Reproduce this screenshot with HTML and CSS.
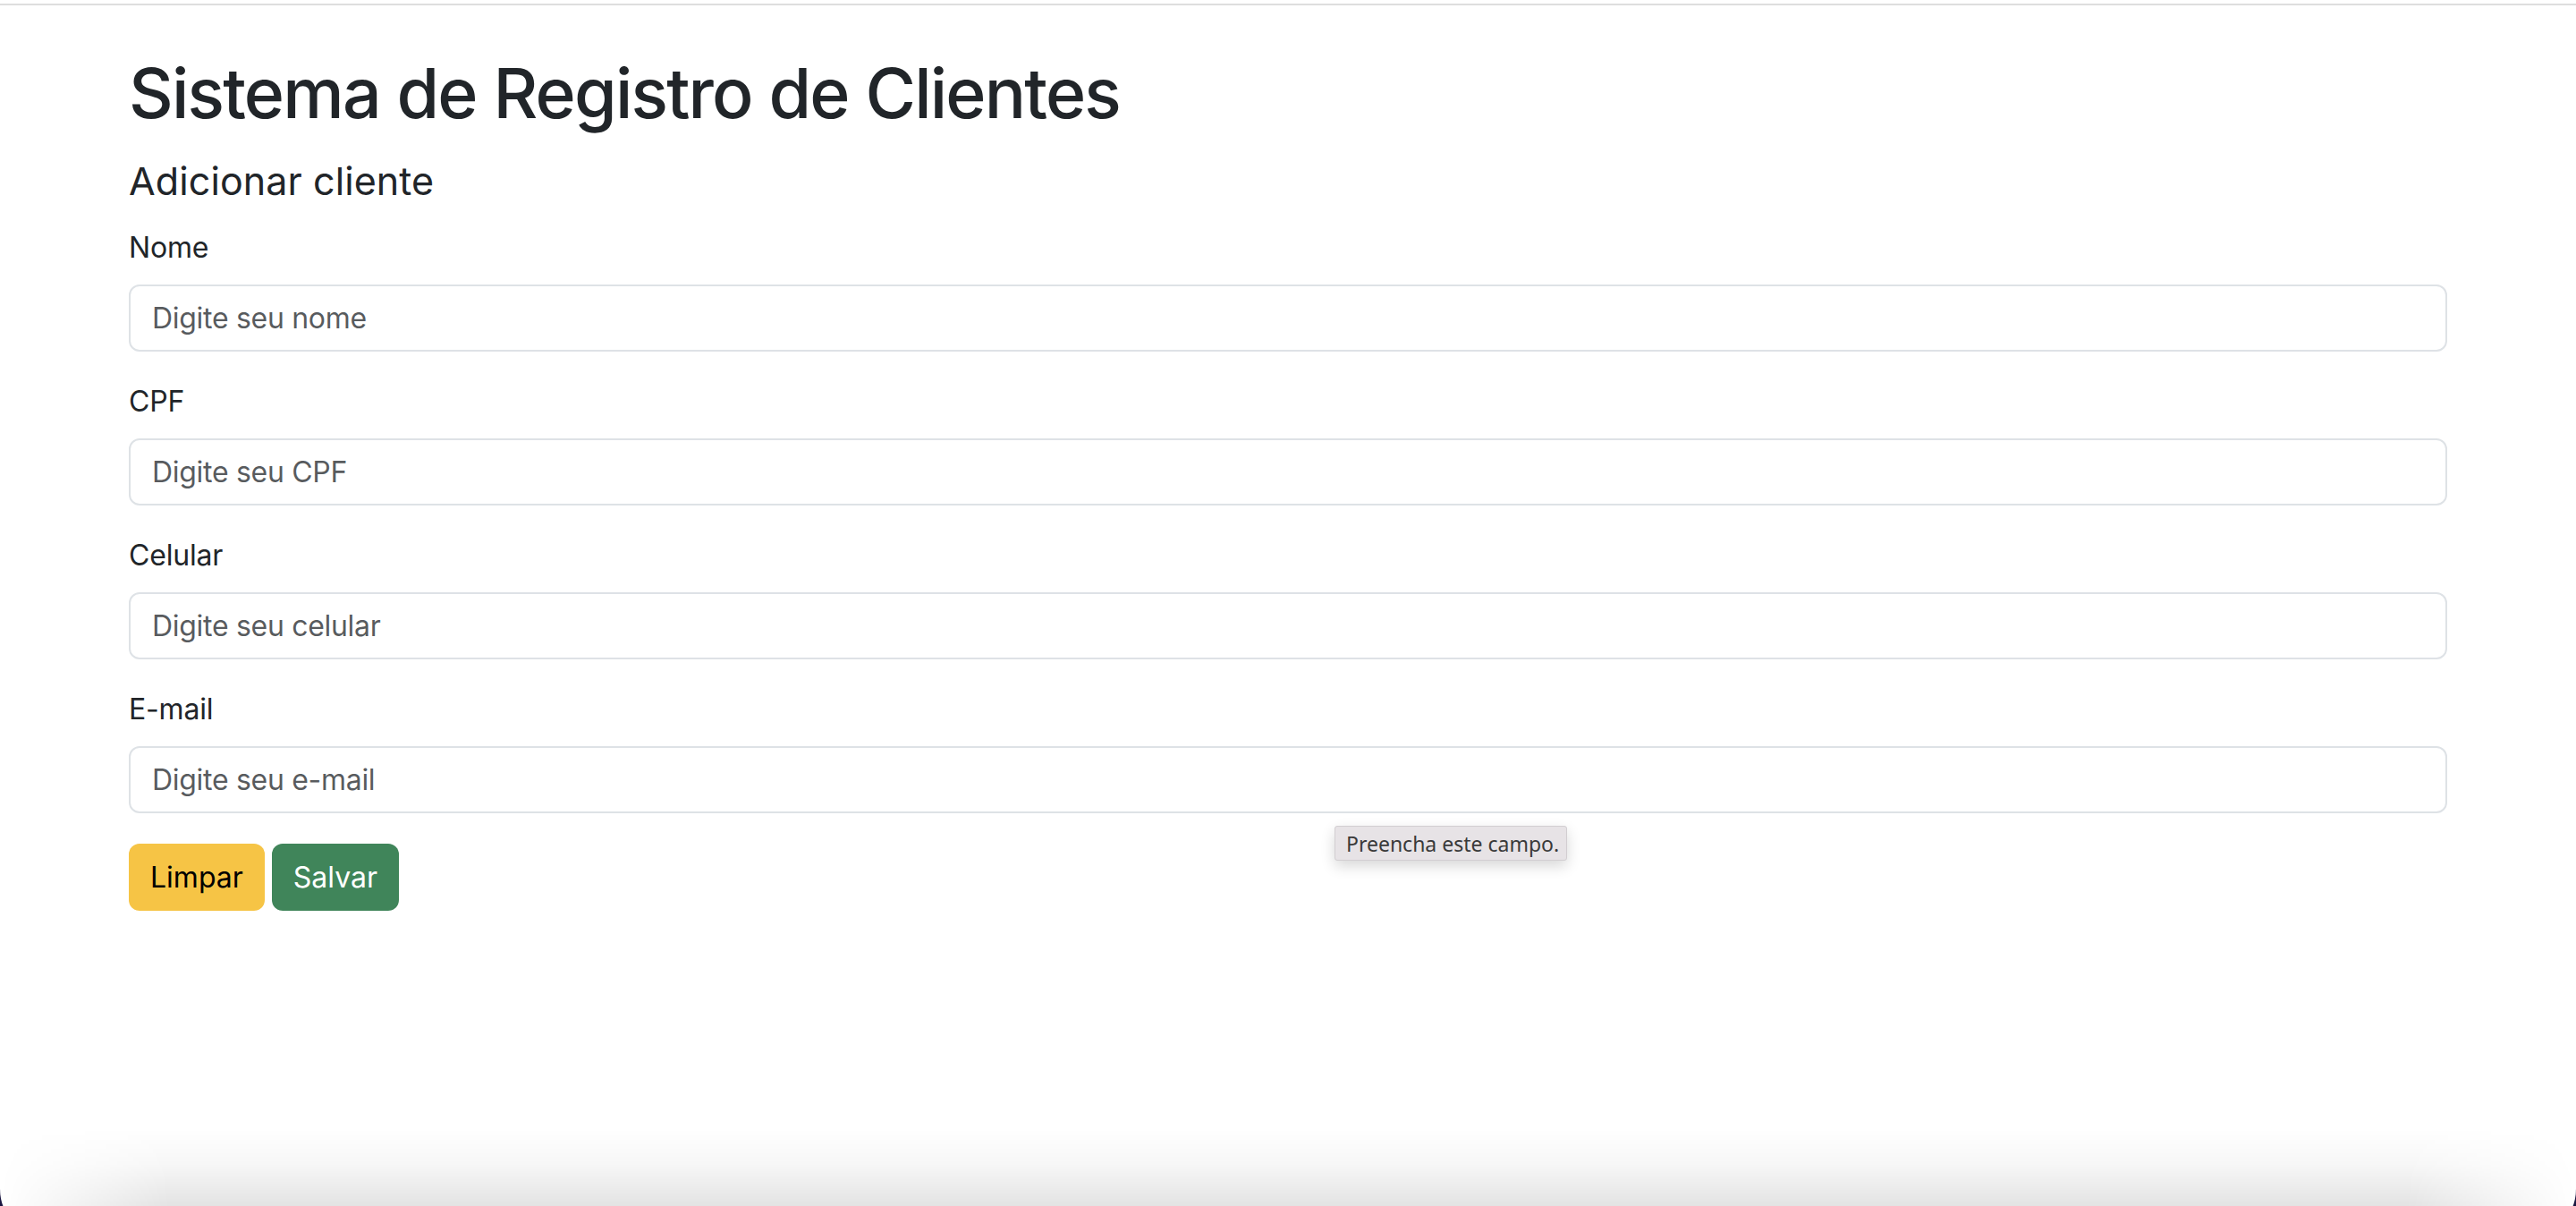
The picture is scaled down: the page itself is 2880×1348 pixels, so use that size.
FILE: index.html
```html
<!DOCTYPE html>
<html lang="pt-BR">
<head>
<meta charset="utf-8">
<title>Sistema de Registro de Clientes</title>
<link rel="stylesheet" href="styles.css">
</head>
<body>
<div class="window">
  <div class="topline"></div>
  <main class="container">
    <h1 class="title">Sistema de Registro de Clientes</h1>
    <h2 class="subtitle">Adicionar cliente</h2>
    <form class="form">
      <div class="group">
        <label class="label" for="nome">Nome</label>
        <input class="control" id="nome" type="text" placeholder="Digite seu nome">
      </div>
      <div class="group">
        <label class="label" for="cpf">CPF</label>
        <input class="control" id="cpf" type="text" placeholder="Digite seu CPF">
      </div>
      <div class="group">
        <label class="label" for="celular">Celular</label>
        <input class="control" id="celular" type="text" placeholder="Digite seu celular">
      </div>
      <div class="group">
        <label class="label" for="email">E-mail</label>
        <input class="control" id="email" type="text" placeholder="Digite seu e-mail">
      </div>
      <div class="actions">
        <button type="button" class="btn btn-warning">Limpar</button>
        <button type="button" class="btn btn-success">Salvar</button>
      </div>
    </form>
  </main>
  <div class="tooltip">Preencha este campo.</div>
</div>
</body>
</html>
```
FILE: styles.css
```css
html {
  background: #1b1640;
  overflow: hidden;
}
body {
  margin: 0;
  font-family: Inter, "Noto Sans", sans-serif;
  color: #212529;
}
.window {
  position: relative;
  min-height: 1385px;
  background: #ffffff;
  border-radius: 0 0 56px 56px;
  overflow: hidden;
}
.window::after {
  content: "";
  position: absolute;
  left: 0;
  right: 0;
  top: 1262px;
  height: 86px;
  background: linear-gradient(to bottom, rgba(0,0,0,0) 0%, rgba(0,0,0,0.03) 45%, rgba(0,0,0,0.11) 100%);
  -webkit-mask-image: linear-gradient(to right, transparent 0, #000 190px, #000 calc(100% - 190px), transparent 100%);
  mask-image: linear-gradient(to right, transparent 0, #000 190px, #000 calc(100% - 190px), transparent 100%);
  pointer-events: none;
}
.topline {
  margin-top: 4px;
  height: 2px;
  background: #dedede;
}
.container {
  width: 2592px;
  margin: 0 auto;
  padding-top: 50px;
}
.title {
  margin: 0;
  font-size: 77px;
  line-height: 96px;
  font-weight: 500;
  letter-spacing: -1.8px;
}
.subtitle {
  margin: 25px 0 26px;
  font-size: 43px;
  line-height: 50px;
  font-weight: 400;
  letter-spacing: 0.1px;
}
.form {
  display: flex;
  flex-direction: column;
}
.group {
  display: flex;
  flex-direction: column;
  margin-bottom: 32px;
}
.label {
  font-size: 32px;
  line-height: 48px;
  margin-bottom: 17px;
  letter-spacing: -0.2px;
}
.control {
  box-sizing: border-box;
  height: 75px;
  width: 100%;
  margin: 0;
  padding: 0 24px;
  border: 2px solid #dee2e6;
  border-radius: 12px;
  font-family: inherit;
  font-size: 32px;
  letter-spacing: -0.3px;
  color: #212529;
  background: #fff;
  outline: none;
}
.control::placeholder {
  color: rgba(33, 37, 41, 0.75);
  opacity: 1;
}
.actions {
  display: flex;
  gap: 8px;
  margin-top: 2px;
}
.btn {
  box-sizing: border-box;
  height: 75px;
  padding: 0 24px;
  border: none;
  border-radius: 12px;
  font-family: inherit;
  font-size: 32px;
  line-height: 1;
}
.btn-warning {
  background: #f6c445;
  color: #000;
}
.btn-success {
  background: #40855a;
  color: #fff;
}
.tooltip {
  position: absolute;
  left: 1492px;
  top: 923px;
  box-sizing: border-box;
  width: 260px;
  height: 39px;
  padding: 0 0 0 12px;
  display: flex;
  align-items: center;
  background: #e7e3e6;
  border: 1px solid #d2ced1;
  border-radius: 3px;
  box-shadow: 0 6px 16px rgba(0, 0, 0, 0.16);
  font-family: "Noto Sans", "Open Sans", sans-serif;
  font-size: 23px;
  color: #3a3a3a;
}
```
